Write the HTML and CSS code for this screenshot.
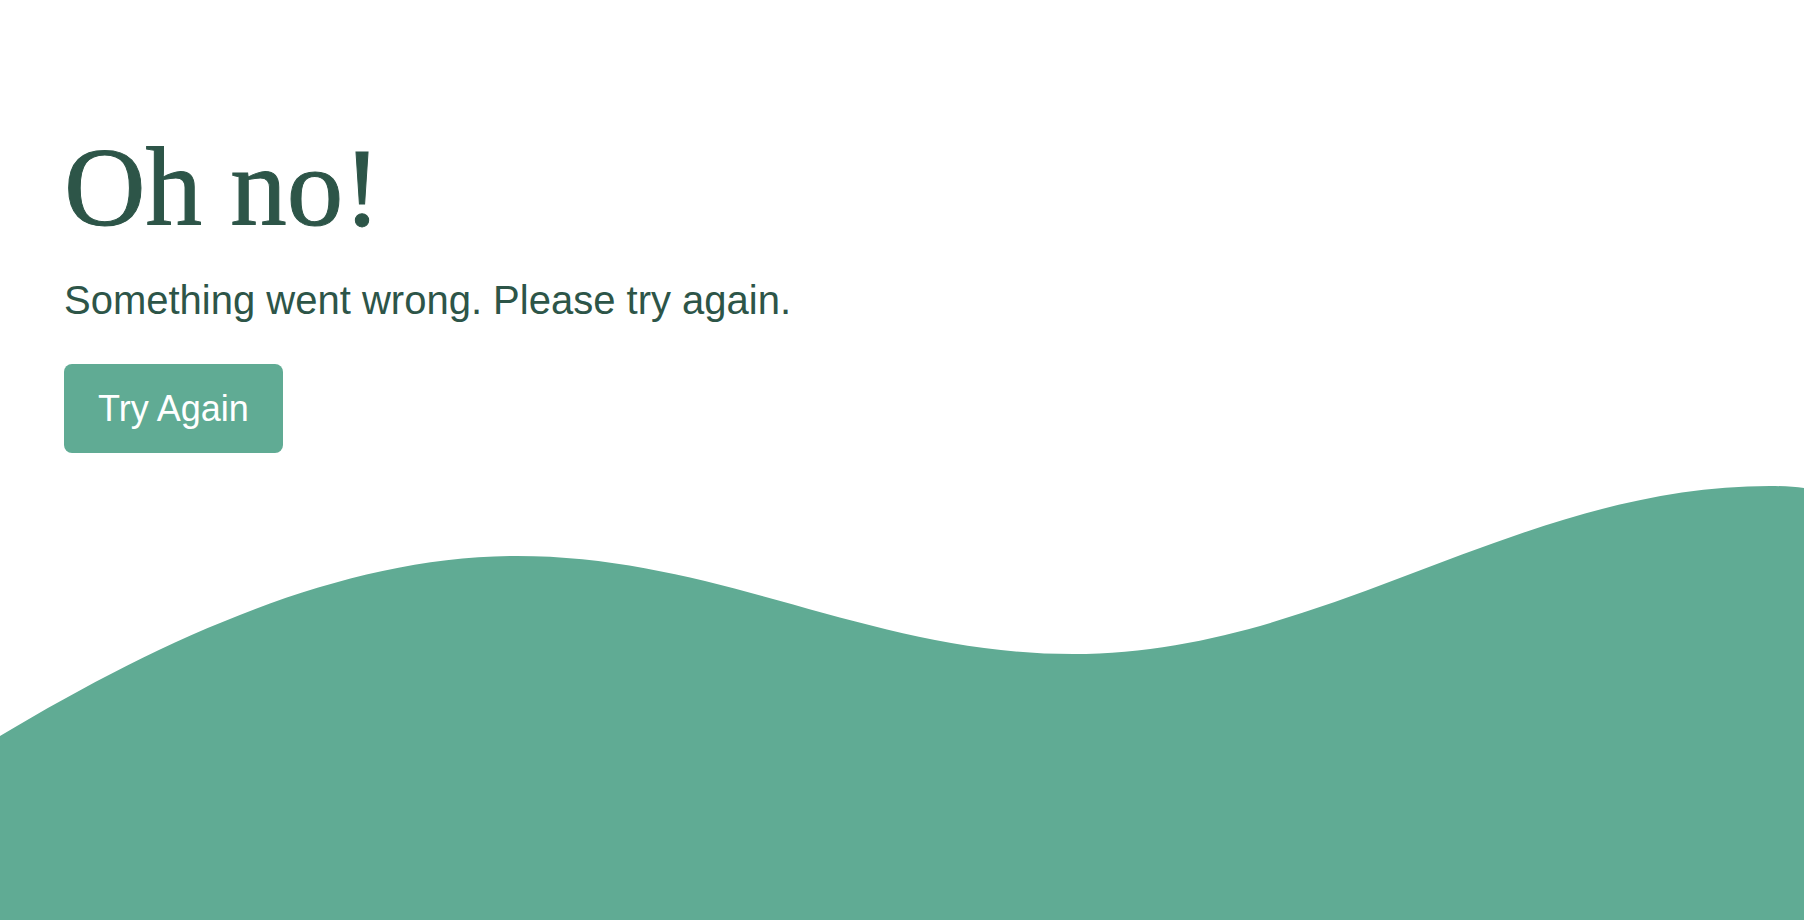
FILE: index.html
```html
<!DOCTYPE html>
<html lang="en">
<head>
<meta charset="utf-8">
<title>Oh no!</title>
<link rel="stylesheet" href="styles.css">
</head>
<body>
<div class="page">
  <main class="content">
    <h1 class="title">Oh no!</h1>
    <p class="message">Something went wrong. Please try again.</p>
    <button class="retry" type="button">Try Again</button>
  </main>
  <svg class="wave" viewBox="0 453 1804 467" preserveAspectRatio="none" aria-hidden="true">
    <path d="M0,736 C170,634 347,556 517,556 C720,556 870,654 1073,654 C1327,654 1516,486 1770,486 C1785,486 1795,487 1804,488 L1804,920 L0,920 Z" fill="#60ab94"/>
  </svg>
</div>
</body>
</html>
```

FILE: styles.css
```css
html, body {
  margin: 0;
  padding: 0;
  background: #ffffff;
}

.page {
  height: 100vh;
  display: flex;
  flex-direction: column;
  overflow: hidden;
}

.content {
  height: 453px;
  box-sizing: border-box;
  padding: 130px 0 0 64px;
  display: flex;
  flex-direction: column;
  align-items: flex-start;
  flex-shrink: 0;
  color: #2d5548;
}

.title {
  margin: 0;
  font-family: "Liberation Serif", "Times New Roman", serif;
  font-weight: 400;
  font-size: 113px;
  line-height: 1;
  color: #2d5548;
  -webkit-text-stroke: 1px #2d5548;
}

.message {
  margin: 33px 0 0;
  font-family: "Liberation Sans", Arial, sans-serif;
  font-size: 40px;
  line-height: 48px;
  color: #2d5548;
}

.retry {
  margin-top: 40px;
  height: 89px;
  padding: 0 34px;
  border: 0;
  border-radius: 8px;
  background: #60ab94;
  color: #ffffff;
  font-family: "Liberation Sans", Arial, sans-serif;
  font-size: 36px;
  line-height: 89px;
  cursor: pointer;
}

.wave {
  display: block;
  flex: 1;
  width: 100%;
}
```
